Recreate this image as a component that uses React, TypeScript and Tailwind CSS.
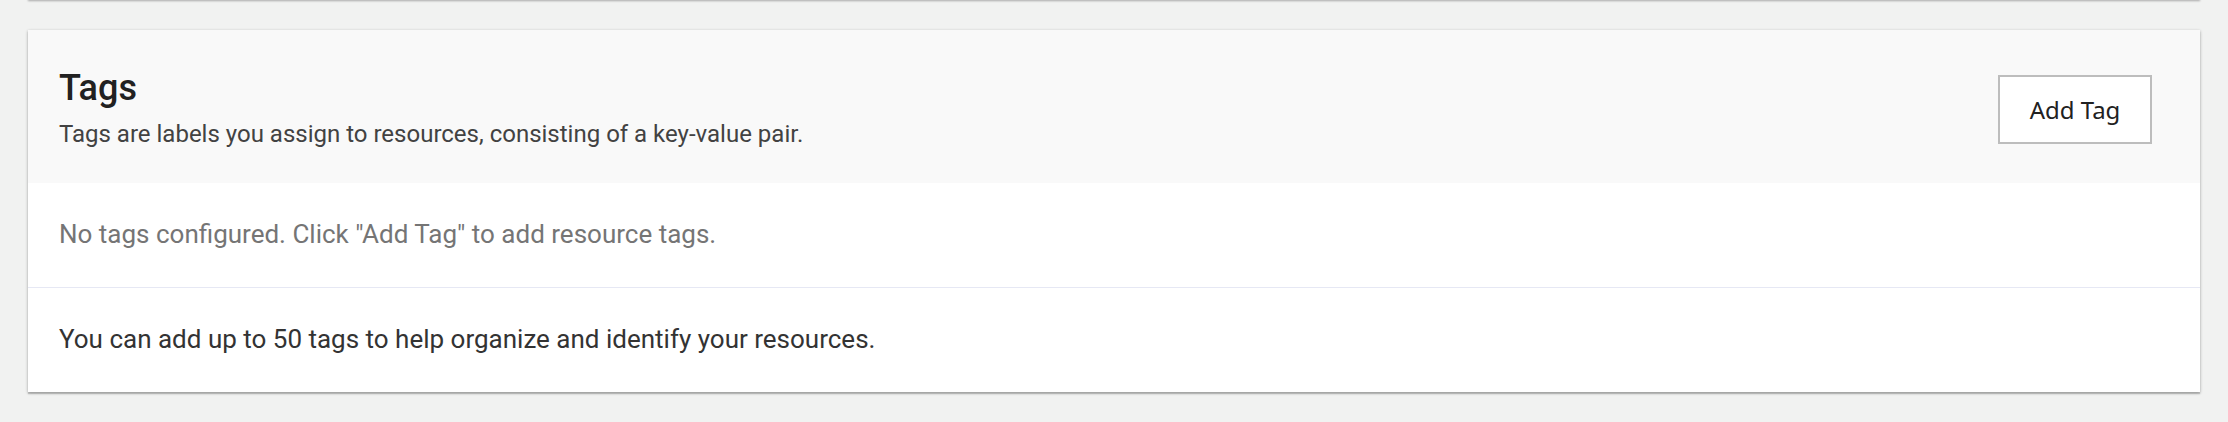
export default function App() {
  return (
    <div className="min-h-screen bg-[#f1f2f1] px-[28px] pb-[30px] font-['Roboto',_'Liberation_Sans',_sans-serif]">
      {/* bottom edge of the card above */}
      <div className="-mt-[12px] h-[12px] bg-white shadow-[0_1px_2px_rgba(0,0,0,0.3)]" />

      <section className="mt-[30px] bg-white shadow-[0_1px_3px_rgba(0,0,0,0.3),0_2px_1px_rgba(0,0,0,0.15)]">
        <div className="flex items-center justify-between bg-[#f9f9f9] pt-[37px] pb-[31px] pl-[31px] pr-[48px]">
          <div>
            <h2 className="text-[36px] leading-[43px] font-medium text-[#212121]">Tags</h2>
            <p className="mt-[6px] text-[24px] leading-[36px] text-[#424242]">
              Tags are labels you assign to resources, consisting of a key-value pair.
            </p>
          </div>
          <button className="h-[69px] w-[154px] border-2 border-[#bdbdbd] bg-white font-['Noto_Sans',_sans-serif] text-[24px] font-normal text-[#212121]">
            Add Tag
          </button>
        </div>

        <div className="pl-[31px] pt-[32px] pb-[33px] text-[26px] leading-[39px] text-[#757575]">
          No tags configured. Click "Add Tag" to add resource tags.
        </div>

        <div className="border-t border-[#e6e8f4] pl-[31px] pt-[32px] pb-[33px] text-[26px] leading-[39px] text-[#333333]">
          You can add up to 50 tags to help organize and identify your resources.
        </div>
      </section>
    </div>
  );
}
